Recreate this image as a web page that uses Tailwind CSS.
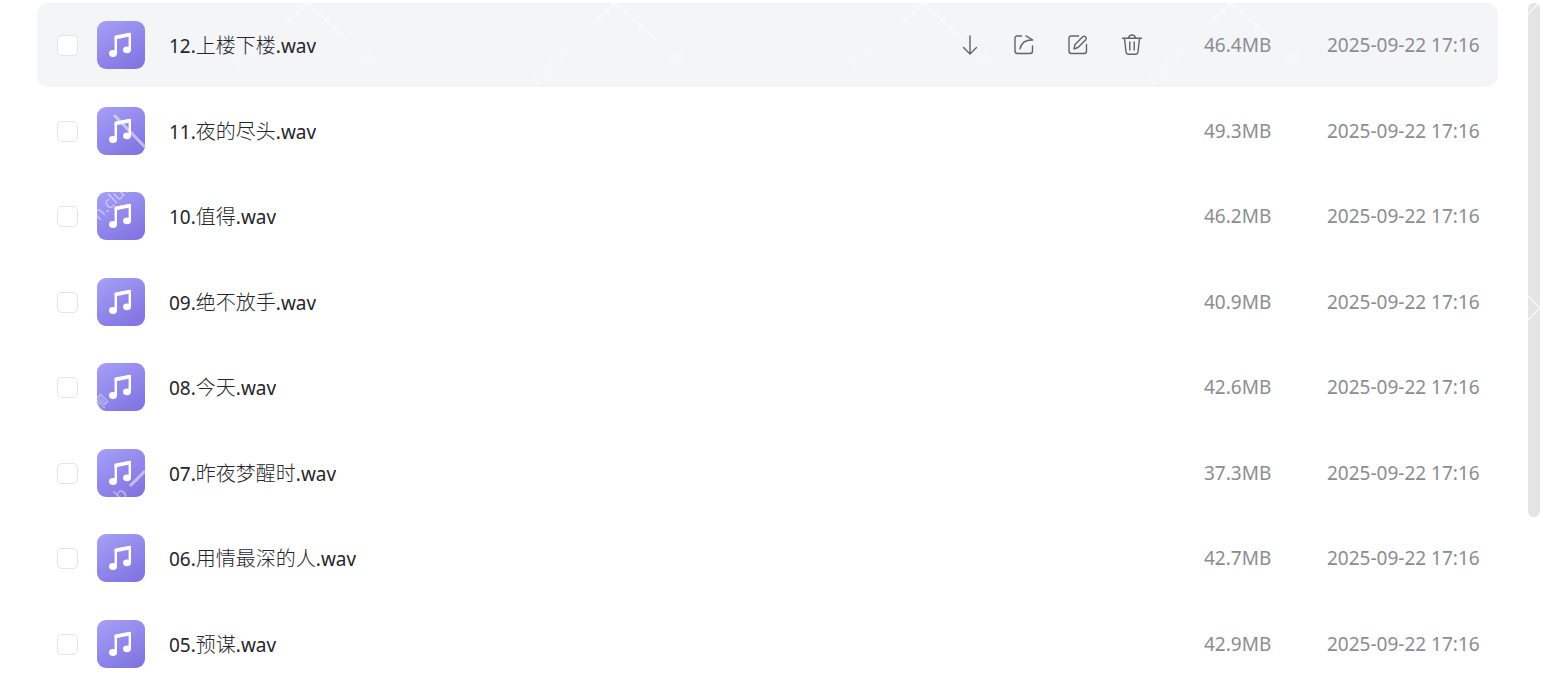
<!DOCTYPE html>
<html lang="zh-CN">
<head>
  <meta charset="UTF-8">
  <meta name="viewport" content="width=device-width, initial-scale=1.0">
  <title>文件列表</title>
  <script src="https://cdn.jsdelivr.net/npm/@tailwindcss/browser@4"></script>
</head>
<body class="relative h-screen overflow-hidden bg-white font-['Noto_Sans','Noto_Sans_CJK_SC',sans-serif]">

  <!-- Shared icons -->
  <svg class="absolute size-0" aria-hidden="true">
    <defs>
      <linearGradient id="musicBg" x1="0.2" y1="0" x2="0.8" y2="1">
        <stop offset="0" stop-color="#a39cf5" />
        <stop offset="1" stop-color="#8074e1" />
      </linearGradient>
    </defs>
    <symbol id="music" viewBox="0 0 48 48">
      <rect width="48" height="48" rx="9" fill="url(#musicBg)" />
      <path d="M18.8 32V15.8L32.8 13V28.5" fill="none" stroke="#fff" stroke-width="2.4" stroke-linejoin="round" />
      <path d="M17.6 15L34 12V15.2L17.6 18.4Z" fill="#fff" />
      <ellipse cx="16" cy="32.5" rx="4" ry="3.4" fill="#fff" />
      <ellipse cx="30" cy="28.8" rx="4" ry="3.4" fill="#fff" />
    </symbol>
  </svg>

  <main class="flex h-full items-start gap-[30px] pt-[3px] pr-[3px] pl-[37px]">
    <table class="block min-w-0 flex-1">
      <tbody id="fileList" class="block"></tbody>
    </table>
    <div class="h-[514px] w-3 shrink-0 rounded-full bg-[#e4e4e4]"></div>
  </main>

  <!-- Watermark -->
  <svg class="pointer-events-none absolute inset-0 h-full w-full" fill="none" stroke="#fff" stroke-width="2" aria-hidden="true">
    <g id="watermarks" opacity="0.5"></g>
    <g opacity="0.5">
      <path d="M114 115L145 147" stroke-width="3" />
      <path d="M130 486L145 471" stroke-width="3" />
      <path d="M1528 296L1540 308L1528 320M1528 14L1539 3" />
    </g>
    <g fill="#fff" stroke="none" font-size="17" opacity="0.45">
      <svg x="97" y="192" width="48" height="48"><text transform="translate(2 29) rotate(-45)">n.club</text></svg>
      <svg x="97" y="363" width="48" height="48"><text transform="translate(-8 38) rotate(45)">是</text></svg>
      <svg x="97" y="449" width="48" height="48"><text transform="translate(24 53) rotate(-45)">b</text></svg>
    </g>
  </svg>

  <script>
    const files = [
      ['12', '上楼下楼', '46.4MB'],
      ['11', '夜的尽头', '49.3MB'],
      ['10', '值得', '46.2MB'],
      ['09', '绝不放手', '40.9MB'],
      ['08', '今天', '42.6MB'],
      ['07', '昨夜梦醒时', '37.3MB'],
      ['06', '用情最深的人', '42.7MB'],
      ['05', '预谋', '42.9MB'],
    ];

    const icons = [
      ['下载', '<path d="M12 3V21M5.5 14.5L12 21L18.5 14.5" />'],
      ['分享', '<path d="M9.5 3H5.5Q3 3 3 5.5V18Q3 20.5 5.5 20.5H18Q20.5 20.5 20.5 18V13" /><path d="M14 2.8L20.8 7Q10 6.5 8 15.8" />'],
      ['重命名', '<path d="M12.5 3H5.5Q3 3 3 5.5V18Q3 20.5 5.5 20.5H18Q20.5 20.5 20.5 18V11.5" /><path d="M8 16L9 11.5L16.8 3.7Q18.2 2.7 19.5 3.8Q20.9 5.2 19.8 6.8L12 14.5Z" />'],
      ['删除', '<path d="M2.5 5.2H21.5M8.5 5Q9 2 12 2T15.5 5M4.5 5.5L6 19Q6.3 21.2 8.3 21.2H15.7Q17.7 21.2 18 19L19.5 5.5M9.8 9V17M14.2 9V17" />'],
    ];

    const actions = icons.map(([label, path]) => `
      <button type="button" aria-label="${label}" class="size-6 cursor-pointer">
        <svg class="size-6" viewBox="0 0 24 24" fill="none" stroke="#626469" stroke-width="1.4" stroke-linejoin="round" stroke-linecap="round">${path}</svg>
      </button>`).join('');

    // The first row is shown in its hover state
    document.getElementById('fileList').innerHTML = files.map(([no, title, size], i) => `
      <tr class="flex h-[84px] items-center rounded-xl pr-[19px] pl-5 text-[19px] leading-7 odd:mb-0.5 even:mb-px first:bg-[#f4f5f7]">
        <td class="flex"><input type="checkbox" id="file${no}" aria-label="${title}" class="size-[21px] appearance-none rounded-[5px] border border-[#e3e4e6] bg-white"></td>
        <td class="ml-[19px] min-w-0 flex-1">
          <label for="file${no}" class="flex items-center gap-6 text-[#25262b]">
            <svg class="size-12 shrink-0"><use href="#music" /></svg>
            <span class="truncate pt-0.5">${no}.<span class="text-xl leading-7 font-light">${title}</span>.wav</span>
          </label>
        </td>
        <td class="mr-[60px] flex gap-[30px]">${i === 0 ? actions : ''}</td>
        <td class="w-[123px] text-[#8b8d93]">${size}</td>
        <td class="w-[152px] whitespace-nowrap text-[#8b8d93]">2025-09-22 17:16</td>
      </tr>`).join('');

    // Repeat the mark along the highlighted row
    document.getElementById('watermarks').innerHTML = [307, 615, 923, 1231].map(x => `
      <path d="M${x - 22} 24L${x} 3L${x + 41} 40" />
      <g fill="#fff" stroke="none" font-size="17" opacity="0.6">
        <text transform="translate(${x + 52} 58) rotate(40)">是</text>
        <text transform="translate(${x - 76} 86) rotate(-50)">n.club</text>
      </g>`).join('');
  </script>
</body>
</html>
